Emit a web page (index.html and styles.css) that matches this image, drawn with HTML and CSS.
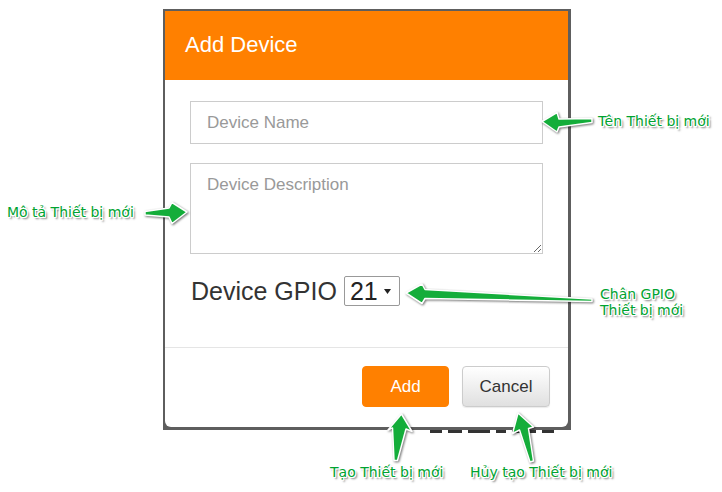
FILE: index.html
```html
<!DOCTYPE html>
<html lang="vi">
<head>
<meta charset="utf-8">
<title>Add Device</title>
<link rel="stylesheet" href="styles.css">
</head>
<body>
<div class="page">
  <div class="shot">
    <div class="modal">
      <div class="modal-header">
        <h4 class="modal-title">Add Device</h4>
      </div>
      <div class="modal-body">
        <input class="form-control" type="text" placeholder="Device Name">
        <textarea class="form-control area" placeholder="Device Description"></textarea>
        <div class="gpio">
          <label class="gpio-label">Device GPIO</label>
          <span class="select-wrap">
            <select class="gpio-select"><option>21</option></select>
            <svg class="caret" width="7" height="5" viewBox="0 0 7 5"><polygon points="0,0 7,0 3.5,5" fill="#222"/></svg>
          </span>
        </div>
      </div>
      <div class="modal-footer">
        <button class="btn btn-add">Add</button>
        <button class="btn btn-cancel">Cancel</button>
      </div>
    </div>
  </div>
  <div class="peek">
    <span class="peek-mark w12"></span>
    <span class="peek-mark w14"></span>
    <span class="peek-mark w22"></span>
    <span class="peek-mark w10"></span>
    <span class="peek-mark w24"></span>
    <span class="peek-mark w12"></span>
  </div>

  <svg class="arrows" width="722" height="492" viewBox="0 0 722 492">
    <g class="arrow">
      <polygon points="542,121.5 557,112.5 559,119 592,118.5 592,122.5 559,127 557,132"/>
      <polygon points="145,211.5 169,208 172,202.5 187,212 172,223.5 169,217 145,215"/>
      <polygon points="406,293 422,284 425,289.5 592,299 592,301.5 425,298.5 422,303.5"/>
      <polygon points="401.5,414 412,431.5 406,429 397.5,460.5 394,460.5 392.5,428 388,430"/>
      <polygon points="518,413 533.5,427 528.5,428.5 533.5,461 530,462 519.5,430 512.5,433.5"/>
    </g>
  </svg>

  <div class="note note-name">Tên Thiết bị mới</div>
  <div class="note note-desc">Mô tả Thiết bị mới</div>
  <div class="note note-gpio">Chân GPIO<br>Thiết bị mới</div>
  <div class="note note-add">Tạo Thiết bị mới</div>
  <div class="note note-cancel">Hủy tạo Thiết bị mới</div>
</div>
</body>
</html>
```

FILE: styles.css
```css
* {
  box-sizing: border-box;
}

body {
  margin: 0;
  background: #fff;
  font-family: "Liberation Sans", Arial, sans-serif;
}

.page {
  position: relative;
  width: 722px;
  height: 492px;
  padding-top: 9px;
  overflow: hidden;
}

.shot {
  margin-left: 163px;
  width: 408px;
  padding: 2px 3px 3px 2px;
  background: #5e5e5e;
}

.modal {
  height: 416px;
  background: #fff;
  border-radius: 0 0 6px 6px;
  display: flex;
  flex-direction: column;
}

.modal-header {
  height: 69px;
  padding: 21px 20px 0;
  background: #ff8000;
  flex: none;
}

.modal-title {
  margin: 0;
  font-size: 22px;
  line-height: 25px;
  font-weight: normal;
  color: #fff;
}

.modal-body {
  height: 267px;
  padding: 21px 25px 0;
  flex: none;
}

.form-control {
  display: block;
  width: 100%;
  margin: 0;
  border: 1px solid #ccc;
  border-radius: 0;
  background: #fff;
  font-family: "Liberation Sans", Arial, sans-serif;
  font-size: 17px;
  color: #555;
  outline: none;
}

input.form-control {
  height: 43px;
  padding: 0 16px;
}

.area {
  margin-top: 19px;
  height: 91px;
  padding: 9px 16px 6px;
  line-height: 24px;
  resize: vertical;
}

.form-control::placeholder {
  color: #999;
  opacity: 1;
}

.gpio {
  margin-top: 22px;
  height: 30px;
  display: flex;
  align-items: center;
  gap: 7px;
  padding-left: 1px;
}

.gpio-label {
  font-size: 25px;
  line-height: 30px;
  color: #333;
}

.select-wrap {
  position: relative;
  display: block;
  width: 56px;
  height: 30px;
}

.gpio-select {
  appearance: none;
  -webkit-appearance: none;
  display: block;
  width: 56px;
  height: 30px;
  margin: 0;
  padding: 0 0 0 5px;
  border: 1px solid #999;
  border-radius: 2px;
  background: #fff;
  font-family: "Liberation Sans", Arial, sans-serif;
  font-size: 25px;
  color: #222;
  outline: none;
}

.caret {
  position: absolute;
  right: 9px;
  top: 13px;
  pointer-events: none;
}

.modal-footer {
  flex: 1;
  border-top: 1px solid #e5e5e5;
  padding: 18px 18px 0 0;
  display: flex;
  justify-content: flex-end;
  align-items: flex-start;
  gap: 13px;
}

.btn {
  height: 41px;
  padding: 0;
  border-radius: 4px;
  font-family: "Liberation Sans", Arial, sans-serif;
  font-size: 17px;
  cursor: pointer;
}

.btn-add {
  width: 87px;
  border: 1px solid #ff8000;
  background: #ff8000;
  color: #fff;
}

.btn-cancel {
  width: 88px;
  border: 1px solid #ccc;
  background: linear-gradient(#fff, #e0e0e0);
  color: #333;
  box-shadow: 0 1px 1px rgba(0, 0, 0, 0.08);
}

.peek {
  margin-left: 430px;
  height: 3px;
  display: flex;
  gap: 6px;
}

.peek-mark {
  display: block;
  height: 3px;
  background: #333;
}

.w10 { width: 10px; }
.w12 { width: 12px; }
.w14 { width: 14px; }
.w22 { width: 22px; }
.w24 { width: 24px; }

.arrows {
  position: absolute;
  left: 0;
  top: 0;
  pointer-events: none;
}

.arrow polygon {
  fill: #14ad3a;
  stroke: #fff;
  stroke-width: 1.5;
  stroke-linejoin: round;
  filter: drop-shadow(1.5px 1.5px 1.2px rgba(0, 0, 0, 0.55));
}

.note {
  position: absolute;
  white-space: nowrap;
  font-family: "DejaVu Sans", Verdana, sans-serif;
  font-size: 14px;
  line-height: 16px;
  color: #00a331;
  text-shadow:
    -1px -1px 0 #fff, 0 -1px 0 #fff, 1px -1px 0 #fff,
    -1px 0 0 #fff, 1px 0 0 #fff,
    -1px 1px 0 #fff, 0 1px 0 #fff, 1px 1px 0 #fff,
    2px 2px 2px rgba(0, 0, 0, 0.6);
}

.note-name {
  left: 598px;
  top: 113px;
}

.note-desc {
  left: 7px;
  top: 204px;
}

.note-gpio {
  left: 600px;
  top: 286px;
}

.note-add {
  left: 330px;
  top: 464px;
}

.note-cancel {
  left: 470px;
  top: 464px;
}
```
